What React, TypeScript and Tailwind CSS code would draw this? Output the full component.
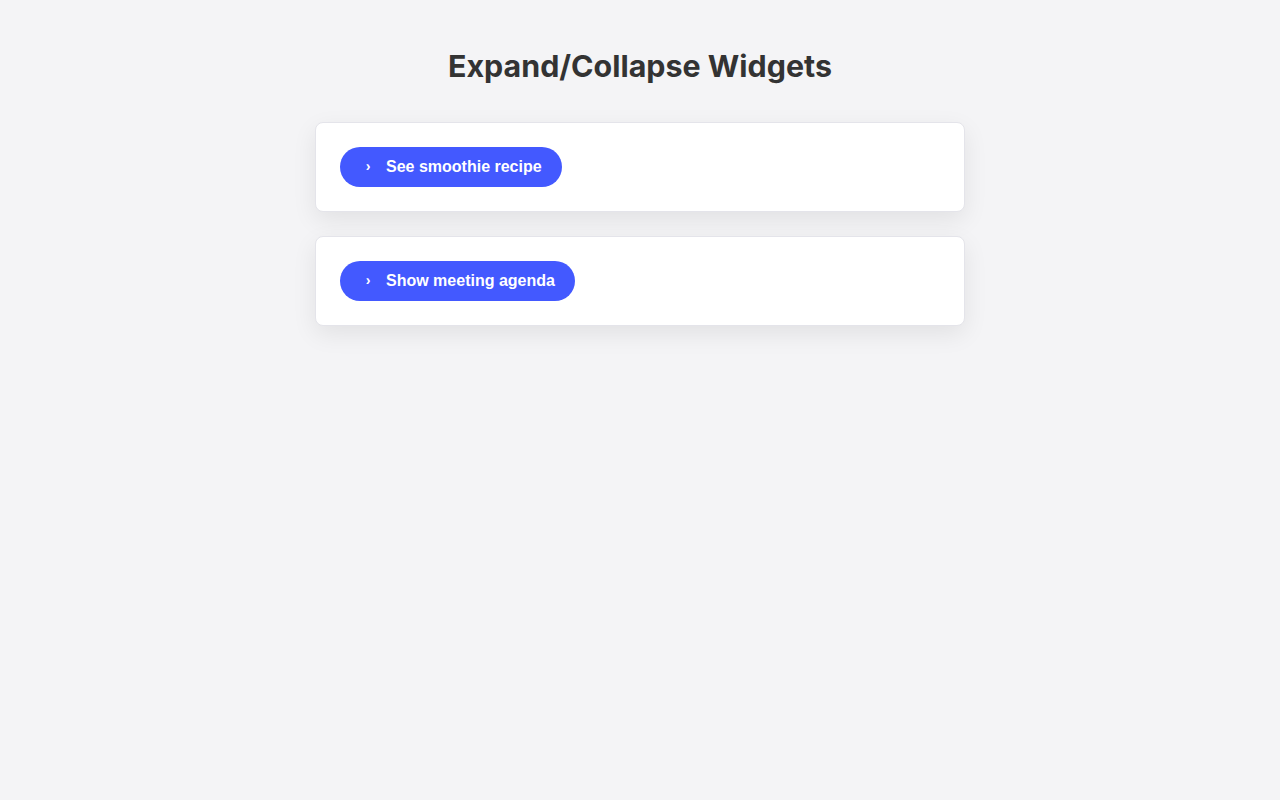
const widgets = [
  { id: 'smoothie', label: 'See smoothie recipe' },
  { id: 'agenda', label: 'Show meeting agenda' },
];

const Widget = ({ label }: { label: string }) => {
  return (
    <div className="bg-white border border-[#e4e4ea] rounded-lg p-6 shadow-[0_8px_24px_rgba(0,0,0,0.08)]">
      <button
        type="button"
        className="inline-flex items-center gap-2.5 bg-[#4359ff] text-white rounded-full px-5 py-2.5 text-base leading-[19.6px] font-bold font-['Liberation_Sans',Arial,sans-serif]"
      >
        <span className="inline-block w-4 text-center text-[14px]">›</span>
        <span>{label}</span>
      </button>
    </div>
  );
};

export default function App() {
  return (
    <div className="min-h-screen bg-[#f4f4f6] pt-[47px] font-['Inter',sans-serif]">
      <h1 className="text-center text-[30.4px] leading-[38px] font-bold text-[#333333] mb-[37.4px]">
        Expand/Collapse Widgets
      </h1>
      <div className="w-[650px] mx-auto flex flex-col gap-6">
        {widgets.map((w) => (
          <Widget key={w.id} label={w.label} />
        ))}
      </div>
    </div>
  );
}
